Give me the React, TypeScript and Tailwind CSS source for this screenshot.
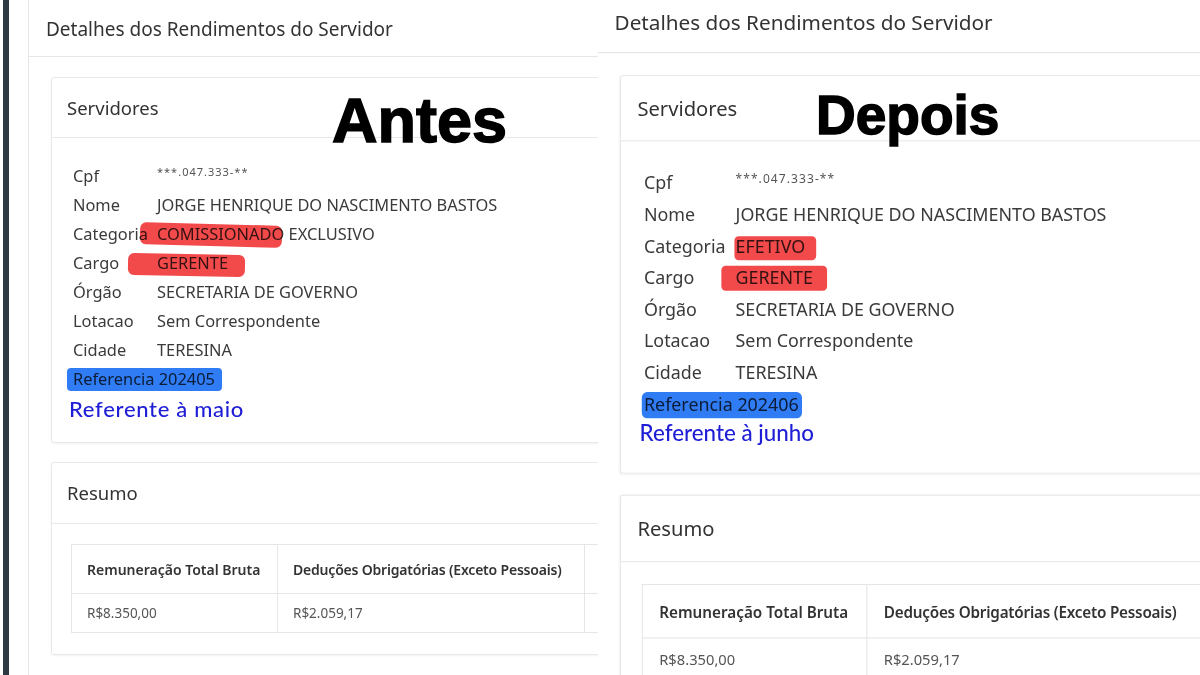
type Panel = {
  categoria: string;
  catMark: string;
  cargoMark: string;
  refMark: string;
  referencia: string;
  referente: string;
};

const antes: Panel = {
  categoria: "COMISSIONADO EXCLUSIVO",
  catMark: "-left-[17px] top-[2px] h-[22px] w-[142px] rotate-[1.5deg] rounded-[6px]",
  cargoMark: "-left-[29px] top-[3px] h-[22px] w-[117px] rotate-[1deg] rounded-[6px]",
  refMark: "-left-[6px] top-[1px] h-[23px] w-[155px] rounded-[4px]",
  referencia: "202405",
  referente: "Referente à maio",
};

const depois: Panel = {
  categoria: "EFETIVO",
  catMark: "-left-[1px] top-[3px] h-[22px] w-[75px] rounded-[4px]",
  cargoMark: "-left-[13px] top-[1px] h-[23px] w-[97px] rounded-[4px]",
  refMark: "-left-[2px] top-[1px] h-[24px] w-[147px] rounded-[5px]",
  referencia: "202406",
  referente: "Referente à junho",
};

function Mark({ className, color }: { className: string; color: string }) {
  return <span className={`pointer-events-none absolute mix-blend-multiply ${color} ${className}`} />;
}

function Row({ label, children }: { label: string; children: React.ReactNode }) {
  return (
    <div className="flex h-[29px] items-center">
      <span className="w-[84px] shrink-0">{label}</span>
      {children}
    </div>
  );
}

function Page({ p, tight }: { p: Panel; tight?: boolean }) {
  return (
    <div className="w-[1000px] shrink-0 bg-white font-['Noto_Sans',sans-serif] text-[#3a3a3a]">
      <div className="flex h-[57px] items-center border-b border-[#e6e6e6] pl-[17px] pt-[3px] text-[19px] text-[#333]">
        Detalhes dos Rendimentos do Servidor
      </div>

      <div className="pl-[22px] pt-[20px]">
        <section className="rounded-[3px] border border-[#e8e8e8] shadow-[0_1px_2px_rgba(0,0,0,0.05)]">
          <div className="flex h-[60px] items-center border-b border-[#e8e8e8] pl-[15px] text-[18.5px] text-[#333]">
            Servidores
          </div>
          <div className={tight ? "pb-[25px] pl-[21px] pt-[24px] text-[16.4px]" : "pb-[19px] pl-[21px] pt-[24px] text-[16.4px]"}>
            <Row label="Cpf">
              <span className="-mt-[8px] text-[11px] tracking-[1px] text-[#555]">***.047.333-**</span>
            </Row>
            <Row label="Nome">
              <span>JORGE HENRIQUE DO NASCIMENTO BASTOS</span>
            </Row>
            <Row label="Categoria">
              <span className="relative">
                {p.categoria}
                <Mark className={p.catMark} color="bg-[#f24a4a]" />
              </span>
            </Row>
            <Row label="Cargo">
              <span className="relative">
                GERENTE
                <Mark className={p.cargoMark} color="bg-[#f24a4a]" />
              </span>
            </Row>
            <Row label="Órgão">
              <span>SECRETARIA DE GOVERNO</span>
            </Row>
            <Row label="Lotacao">
              <span>Sem Correspondente</span>
            </Row>
            <Row label="Cidade">
              <span>TERESINA</span>
            </Row>
            <div className="flex h-[29px] items-center">
              <span className="relative">
                Referencia {p.referencia}
                <Mark className={p.refMark} color="bg-[#2f7cf5]" />
              </span>
            </div>
            <div
              className={
                tight
                  ? "-ml-[4px] flex h-[23px] items-center font-['Lato',sans-serif] text-[20.5px] font-medium text-[#1e1ed6]"
                  : "-ml-[4px] flex h-[29px] items-center font-['Lato',sans-serif] text-[22px] font-medium tracking-[0.7px] text-[#1e1ed6]"
              }
            >
              {p.referente}
            </div>
          </div>
        </section>

        <section className="mt-[19px] rounded-[3px] border border-[#e8e8e8] shadow-[0_1px_2px_rgba(0,0,0,0.05)]">
          <div className="flex h-[61px] items-center border-b border-[#e8e8e8] pl-[15px] text-[18.5px] text-[#333]">
            Resumo
          </div>
          <div className="pb-[21px] pl-[19px] pt-[20px]">
            <table className="w-[833px] table-fixed border-collapse whitespace-nowrap text-left text-[14px]">
              <thead>
                <tr className="h-[49px]">
                  <th className="w-[206px] border border-[#e6e6e6] px-[15px] font-semibold text-[#333]">Remuneração Total Bruta</th>
                  <th className="w-[307px] border border-[#e6e6e6] px-[15px] font-semibold tracking-[-0.2px] text-[#333]">Deduções Obrigatórias (Exceto Pessoais)</th>
                  <th className="w-[320px] border border-[#e6e6e6] px-[15px] font-semibold text-[#333]">Remuneração Após Deduções</th>
                </tr>
              </thead>
              <tbody>
                <tr className="h-[39px] text-[13.5px] text-[#555]">
                  <td className="border border-[#e6e6e6] px-[15px]">R$8.350,00</td>
                  <td className="border border-[#e6e6e6] px-[15px]">R$2.059,17</td>
                  <td className="border border-[#e6e6e6] px-[15px]">R$6.290,83</td>
                </tr>
              </tbody>
            </table>
          </div>
        </section>
      </div>
    </div>
  );
}

export default function App() {
  return (
    <div className="flex h-[675px] w-[1200px] overflow-hidden bg-white">
      <div className="relative flex h-full w-[598px] shrink-0 overflow-hidden">
        <div className="ml-[3px] h-full w-[6px] shrink-0 bg-[#2e3a43]" />
        <div className="ml-[19px] h-full border-l border-[#e6e6e6]">
          <Page p={antes} />
        </div>
        <span className="absolute left-[332px] top-[89px] font-['Liberation_Sans',Arial,sans-serif] text-[63px] font-bold leading-none text-black [-webkit-text-stroke:1.5px_black]">
          Antes
        </span>
      </div>

      <div className="relative h-full w-[602px] shrink-0 overflow-hidden">
        <div className="-ml-[2px] -mt-[9px] origin-top-left scale-[1.09]">
          <Page p={depois} tight />
        </div>
        <span className="absolute left-[218px] top-[88px] font-['Liberation_Sans',Arial,sans-serif] text-[55px] font-bold leading-none text-black [-webkit-text-stroke:1.5px_black]">
          Depois
        </span>
      </div>
    </div>
  );
}
